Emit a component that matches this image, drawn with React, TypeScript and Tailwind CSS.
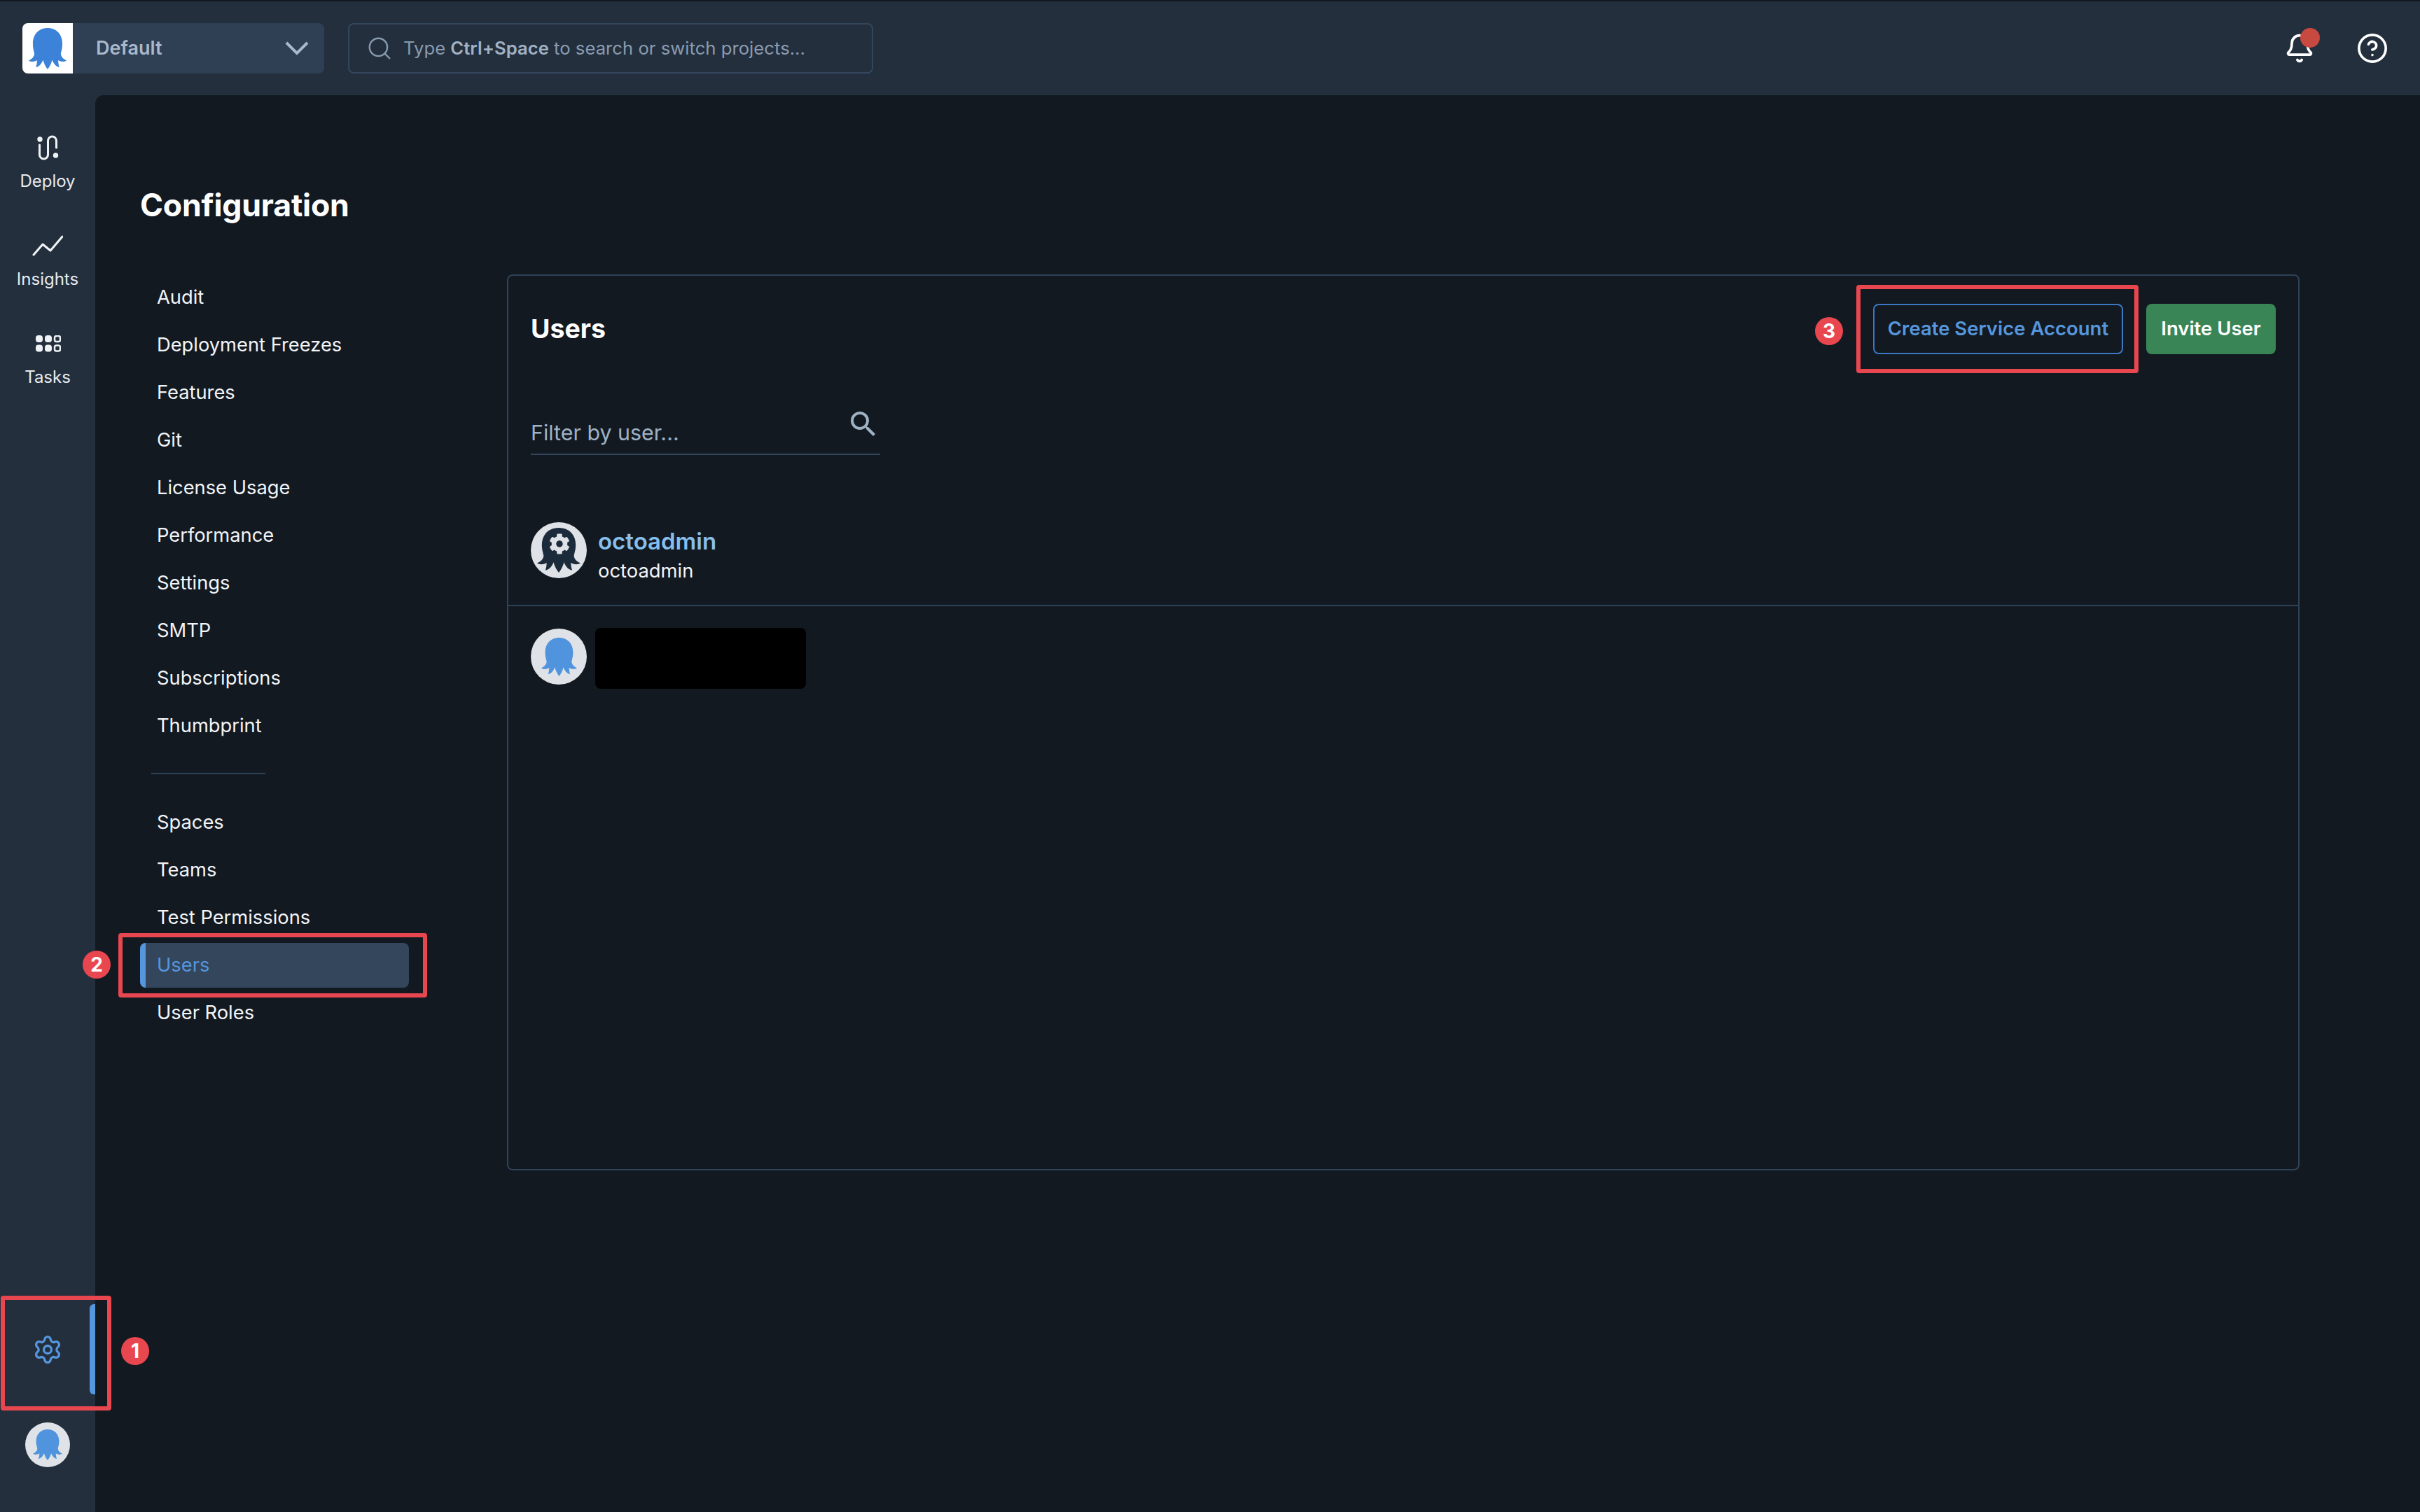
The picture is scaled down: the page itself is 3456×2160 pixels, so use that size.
import { Bell, CircleHelp, Search, Settings } from 'lucide-react'
import { FaCog } from 'react-icons/fa'
import { MdSearch } from 'react-icons/md'

const configLinks = ['Audit', 'Deployment Freezes', 'Features', 'Git', 'License Usage', 'Performance', 'Settings', 'SMTP', 'Subscriptions', 'Thumbprint']

function Octopus({ className }: { className: string }) {
  return (
    <svg viewBox="0 0 100 100" preserveAspectRatio="none" className={className} fill="currentColor">
      <path d="M50 0C26 0 11 16 11 38c0 12 3 18 4 24 0 7-6 13-15 17 7 4 15 3 22-1 0 6-1 12-3 17 8-1 15-8 19-18 2 8 6 16 12 23 6-7 10-15 12-23 4 10 11 17 19 18-2-5-3-11-3-17 7 4 15 5 22 1-9-4-15-10-15-17 1-6 4-12 4-24C89 16 74 0 50 0Z" />
    </svg>
  )
}

function RailItem({ label, icon }: { label: string; icon: React.ReactNode }) {
  return (
    <div className="flex h-[140px] flex-col items-center">
      <div className="flex h-[60px] items-center justify-center">{icon}</div>
      <span className="text-[24px] leading-[36px] text-[#e6ebf0]">{label}</span>
    </div>
  )
}

function Badge({ n, className }: { n: number; className: string }) {
  return (
    <div className={`absolute flex h-[40px] w-[40px] items-center justify-center rounded-full bg-[#e8474f] text-[28px] font-bold text-white ${className}`}>
      {n}
    </div>
  )
}

export default function App() {
  return (
    <div className="relative flex h-[2160px] w-[3456px] flex-col overflow-hidden border-t-2 border-[#121921] bg-[#232f3d] font-['Inter',sans-serif] antialiased">
      {/* top bar */}
      <header className="flex h-[134px] shrink-0 items-center pl-[32px] pr-[45px]">
        <div className="flex h-[72px] w-[431px] items-center rounded-lg bg-[#2f3f54]">
          <div className="flex h-[72px] w-[72px] items-center justify-center rounded-l-lg bg-white">
            <Octopus className="h-[59px] w-[54px] text-[#3b82d8]" />
          </div>
          <span className="ml-[33px] text-[27px] font-semibold text-[#a9b9cb]">Default</span>
          <svg viewBox="0 0 34 20" className="ml-auto mr-[22px] h-[20px] w-[34px]" fill="none" stroke="#a9b9cb" strokeWidth="4">
            <path d="M2 2l15 15L32 2" />
          </svg>
        </div>
        <div className="ml-[34px] flex h-[72px] w-[750px] items-center rounded-lg border-2 border-[#34465e] pl-[24px]">
          <Search size={38} strokeWidth={1.5} className="text-[#8a9bb0]" />
          <span className="ml-[15px] text-[25.7px] text-[#8a9bb0]">
            Type <b className="font-semibold text-[#a1b1c4]">Ctrl+Space</b> to search or switch projects...
          </span>
        </div>
        <div className="ml-auto flex items-center gap-[59px]">
          <div className="relative">
            <Bell size={44} strokeWidth={2} className="text-white" />
            <div className="absolute left-[23px] top-[-7px] h-[28px] w-[28px] rounded-full bg-[#c8493f]" />
          </div>
          <CircleHelp size={46} strokeWidth={1.9} className="text-white" />
        </div>
      </header>

      <div className="flex flex-1">
        {/* left rail */}
        <aside className="flex w-[136px] shrink-0 flex-col justify-between pb-[64px] pt-[45px]">
          <div>
            <RailItem
              label="Deploy"
              icon={
                <svg viewBox="0 0 32 36" className="h-[36px] w-[32px]" fill="none" stroke="#f0f3f6" strokeWidth="3" strokeLinecap="round">
                  <circle cx="5" cy="6" r="3.7" fill="#f0f3f6" stroke="none" />
                  <circle cx="27.5" cy="29" r="3.7" fill="#f0f3f6" stroke="none" />
                  <path d="M4.5 14v14a6 6 0 0 0 12 0V8a6 6 0 0 1 12 0v10" />
                </svg>
              }
            />
            <RailItem
              label="Insights"
              icon={
                <svg viewBox="0 0 44 30" className="h-[30px] w-[44px]" fill="none" stroke="#f0f3f6" strokeWidth="3" strokeLinecap="round" strokeLinejoin="round">
                  <path d="M2 28l13-15 11 9L43 2" />
                </svg>
              }
            />
            <RailItem
              label="Tasks"
              icon={
                <svg viewBox="0 0 36 24" className="ml-[1px] h-[24px] w-[36px]" fill="#f0f3f6">
                  <rect x="0" y="0" width="10" height="10" rx="4" />
                  <rect x="13" y="0" width="10" height="10" rx="4" />
                  <rect x="0" y="13.500" width="10" height="10" rx="4" />
                  <rect x="13" y="13.500" width="10" height="10" rx="4" />
                  <rect x="27" y="1" width="8" height="8" rx="2.500" fill="none" stroke="#f0f3f6" strokeWidth="2.500" />
                  <rect x="27" y="14.500" width="8" height="8" rx="2.500" fill="none" stroke="#f0f3f6" strokeWidth="2.500" />
                </svg>
              }
            />
          </div>
          <div className="flex flex-col items-center">
            <div className="relative flex h-[129px] w-full items-center justify-center">
              <Settings size={44} strokeWidth={1.8} className="text-[#5596dd]" />
              <div className="absolute right-0 top-0 h-[129px] w-[8px] rounded-l-md bg-[#5596dd]" />
            </div>
            <div className="mt-[40px] flex h-[64px] w-[64px] items-center justify-center rounded-full bg-[#dfe2e7]">
              <Octopus className="h-[44px] w-[42px] text-[#4f94dd]" />
            </div>
          </div>
        </aside>

        {/* main */}
        <main className="flex-1 rounded-tl-xl bg-[#121921] pl-[64px]">
          <h1 className="mt-[127px] h-[60px] text-[44.6px] font-bold leading-[60px] tracking-[-0.2px] text-white">Configuration</h1>
          <div className="mt-[68px] flex">
            <nav className="w-[524px] shrink-0 text-[27.3px] text-[#f2f4f7]">
              {configLinks.map((l) => (
                <div key={l} className="flex h-[68px] items-center pl-[24px]">{l}</div>
              ))}
              <div className="mb-[35px] ml-[16px] mt-[33px] h-[2px] w-[163px] bg-[#2f4258]" />
              <div className="flex h-[68px] items-center pl-[24px]">Spaces</div>
              <div className="flex h-[68px] items-center pl-[24px]">Teams</div>
              <div className="flex h-[68px] items-center pl-[24px]">Test Permissions</div>
              <div className="my-[2px] flex h-[64px] w-[384px] items-center rounded-lg border-l-8 border-[#5596dd] bg-[#33465c] pl-[16px] text-[#5596dd]">Users</div>
              <div className="flex h-[68px] items-center pl-[24px]">User Roles</div>
            </nav>

            <section className="mt-[1px] h-[1280px] w-[2560px] rounded-lg border-2 border-[#2f4258]">
              <div className="flex items-center justify-between px-[32px] pt-[40px]">
                <h2 className="pt-[1px] text-[37.5px] font-bold text-white">Users</h2>
                <div className="flex gap-[33px]">
                  <button className="h-[72px] w-[357px] rounded-lg border-2 border-[#3b78c4] text-[27.5px] font-semibold text-[#5596dd]">Create Service Account</button>
                  <button className="h-[72px] w-[185px] rounded-lg bg-[#3a8555] text-[27.5px] font-semibold text-white">Invite User</button>
                </div>
              </div>

              <div className="px-[32px]">
                <div className="mt-[60px] flex h-[84px] w-[499px] justify-between border-b-2 border-[#34465e]">
                  <span className="self-end pb-[8px] text-[30.4px] leading-[44px] text-[#9fb2c4]">Filter by user...</span>
                  <MdSearch size={48} className="mt-[16px] text-[#9fb2c4]" />
                </div>
              </div>

              <div className="flex gap-[16px] border-b-2 border-[#2f4258] px-[32px] pb-[29px] pt-[96px]">
                <div className="relative flex h-[80px] w-[80px] shrink-0 items-center justify-center rounded-full bg-[#dfe2e7]">
                  <Octopus className="h-[64px] w-[62px] text-[#1c2b3b]" />
                  <FaCog className="absolute left-[26px] top-[16px] h-[30px] w-[30px] text-[#dfe2e7]" />
                </div>
                <div className="pt-[5px]">
                  <div className="text-[33px] font-semibold leading-[44px] text-[#87bfec]">octoadmin</div>
                  <div className="text-[27.4px] leading-[40px] text-[#f2f4f7]">octoadmin</div>
                </div>
              </div>

              <div className="flex gap-[12px] px-[32px] pt-[31px]">
                <div className="mt-[1px] flex h-[80px] w-[80px] shrink-0 items-center justify-center rounded-full bg-[#dfe2e7]">
                  <Octopus className="h-[55px] w-[51px] text-[#4f94dd]" />
                </div>
                <div className="h-[87px] w-[301px] rounded-lg bg-black" />
              </div>
            </section>
          </div>
        </main>
      </div>

      {/* annotations */}
      <div className="absolute left-[1px] top-[1849px] h-[164px] w-[158px] rounded-sm border-[6px] border-[#e8474f]" />
      <div className="absolute left-[169px] top-[1331px] h-[92px] w-[441px] rounded-sm border-[6px] border-[#e8474f]" />
      <div className="absolute left-[2651px] top-[405px] h-[126px] w-[403px] rounded-sm border-[6px] border-[#e8474f]" />
      <Badge n={1} className="left-[173px] top-[1908px]" />
      <Badge n={2} className="left-[118px] top-[1356px]" />
      <Badge n={3} className="left-[2592px] top-[451px]" />
    </div>
  )
}
